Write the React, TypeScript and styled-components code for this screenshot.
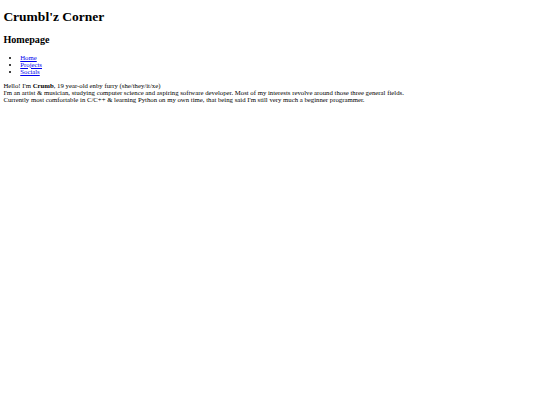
import { FC } from "react";
import styled, { createGlobalStyle } from "styled-components";

// the reference is a 1280px-wide page shrunk to 540px, so every
// browser default is multiplied by this factor
const s = 540 / 1280;
const base = 16 * s;

interface NavLink {
  label: string;
  href: string;
}

const links: NavLink[] = [
  { label: "Home", href: "#" },
  { label: "Projects", href: "#projects" },
  { label: "Socials", href: "#socials" },
];

const GlobalStyle = createGlobalStyle`
  html {
    font-size: ${base}px;
  }

  body {
    margin: ${8 * s}px;
    font-family: "Liberation Serif", "Times New Roman", serif;
    font-size: ${base}px;
    color: #000;
    background: #fff;
  }
`;

const App: FC = () => {
  return (
    <>
      <GlobalStyle />
      <Title>Crumbl'z Corner</Title>
      <SubTitle>Homepage</SubTitle>
      <NavList>
        {links.map((link) => (
          <li key={link.label}>
            <Link href={link.href}>{link.label}</Link>
          </li>
        ))}
      </NavList>
      <Intro>
        Hello! I'm <b>Crumb</b>, 19 year-old enby furry (she/they/it/xe)
        <br />
        I'm an artist &amp; musician, studying computer science and aspiring
        software developer. Most of my interests revolve around those three
        general fields.
        <br />
        Currently most comfortable in C/C++ &amp; learning Python on my own
        time, that being said I'm still very much a beginner programmer.
      </Intro>
    </>
  );
};

export default App;

const Title = styled.h1`
  font-size: 2em;
  font-weight: bold;
  margin: 6px 0 0.67em;
`;

const SubTitle = styled.h2`
  font-size: 1.5em;
  font-weight: bold;
  margin: 0.83em 0;
`;

const NavList = styled.ul`
  list-style-type: disc;
  margin: 1em 0;
  padding-left: ${40 * s}px;
`;

const Link = styled.a`
  color: #0000ee;
  text-decoration: underline;
`;

const Intro = styled.div`
  margin: 0;
  line-height: normal;
`;
